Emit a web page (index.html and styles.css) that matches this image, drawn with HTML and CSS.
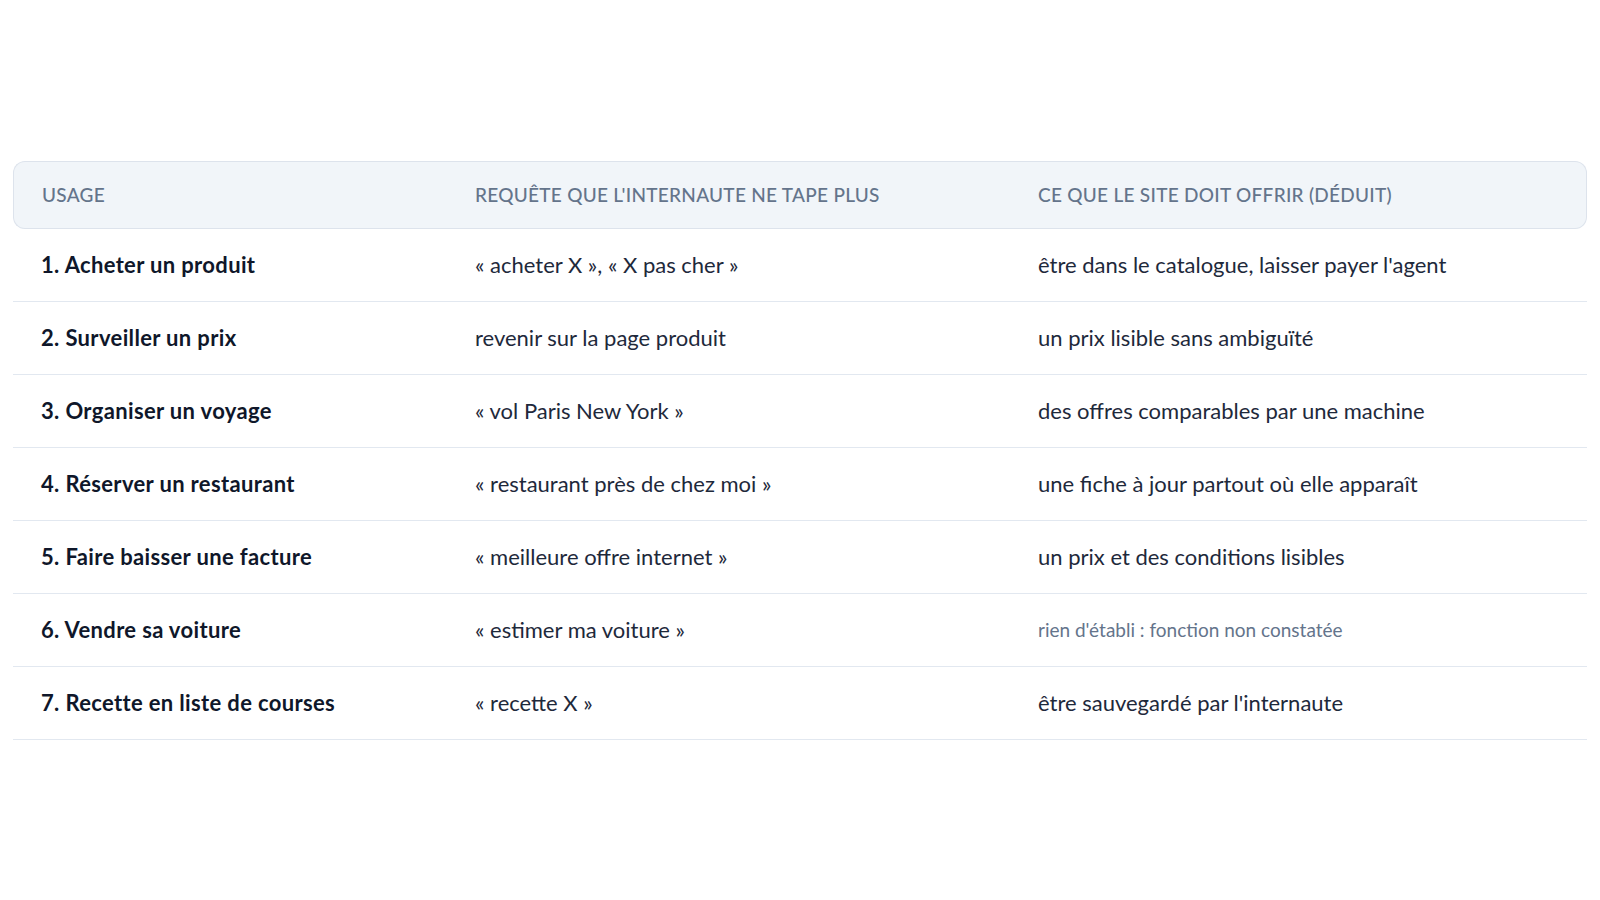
FILE: index.html
```html
<!DOCTYPE html>
<html lang="fr">
<head>
<meta charset="utf-8">
<title>Usages</title>
<link rel="stylesheet" href="styles.css">
</head>
<body>
<main class="page">
  <table class="usage-table">
    <colgroup>
      <col class="col-usage">
      <col class="col-query">
      <col class="col-offer">
    </colgroup>
    <thead>
      <tr>
        <th>Usage</th>
        <th>Requête que l'internaute ne tape plus</th>
        <th>Ce que le site doit offrir (déduit)</th>
      </tr>
    </thead>
    <tbody>
      <tr>
        <td class="usage">1. Acheter un produit</td>
        <td>« acheter X », « X pas cher »</td>
        <td>être dans le catalogue, laisser payer l'agent</td>
      </tr>
      <tr>
        <td class="usage">2. Surveiller un prix</td>
        <td>revenir sur la page produit</td>
        <td>un prix lisible sans ambiguïté</td>
      </tr>
      <tr>
        <td class="usage">3. Organiser un voyage</td>
        <td>« vol Paris New York »</td>
        <td>des offres comparables par une machine</td>
      </tr>
      <tr>
        <td class="usage">4. Réserver un restaurant</td>
        <td>« restaurant près de chez moi »</td>
        <td>une fiche à jour partout où elle apparaît</td>
      </tr>
      <tr>
        <td class="usage">5. Faire baisser une facture</td>
        <td>« meilleure offre internet »</td>
        <td>un prix et des conditions lisibles</td>
      </tr>
      <tr>
        <td class="usage">6. Vendre sa voiture</td>
        <td>« estimer ma voiture »</td>
        <td class="muted">rien d'établi : fonction non constatée</td>
      </tr>
      <tr>
        <td class="usage">7. Recette en liste de courses</td>
        <td>« recette X »</td>
        <td>être sauvegardé par l'internaute</td>
      </tr>
    </tbody>
  </table>
</main>
</body>
</html>
```

FILE: styles.css
```css
* { box-sizing: border-box; }

html, body {
  margin: 0;
  padding: 0;
  background: #ffffff;
}

body {
  font-family: "Lato", "Noto Sans", "Liberation Sans", sans-serif;
  color: #1e293b;
}

.page {
  min-height: 100vh;
  display: flex;
  flex-direction: column;
  justify-content: center;
  padding: 0 13px;
}

.usage-table {
  width: 100%;
  table-layout: fixed;
  border-collapse: separate;
  border-spacing: 0;
}

.col-usage { width: 434px; }
.col-query { width: 563px; }
.col-offer { width: auto; }

.usage-table th {
  background: #f1f5f9;
  border-top: 1px solid #dde3ec;
  border-bottom: 1px solid #dde3ec;
  text-align: left;
  font-weight: 500;
  font-size: 19px;
  letter-spacing: 0.015em;
  text-transform: uppercase;
  color: #64748b;
  height: 68px;
  padding: 0 28px;
  vertical-align: middle;
}

.usage-table th:first-child {
  border-left: 1px solid #dde3ec;
  border-radius: 12px 0 0 12px;
}

.usage-table th:last-child {
  border-right: 1px solid #dde3ec;
  border-radius: 0 12px 12px 0;
}

.usage-table td {
  height: 73px;
  padding: 0 28px;
  border-bottom: 1px solid #e2e8f0;
  font-size: 22px;
  color: #1e293b;
  vertical-align: middle;
}

.usage-table td.usage {
  font-weight: 700;
  letter-spacing: 0.35px;
  color: #0f172a;
}

.usage-table td.muted {
  font-size: 19px;
  color: #64748b;
}
```
